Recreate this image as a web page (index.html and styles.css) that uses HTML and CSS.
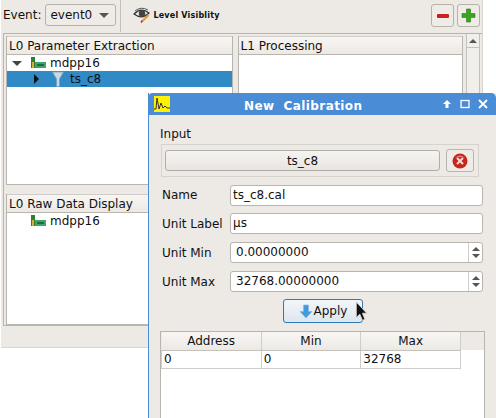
FILE: index.html
```html
<!DOCTYPE html>
<html lang="en">
<head>
  <meta charset="UTF-8">
  <title>New Calibration</title>
  <link rel="stylesheet" href="styles.css">
</head>
<body>

  <div class="main-window">
    <div class="toolbar">
      <span class="event-label">Event:</span>
      <div class="combo">event0 <span class="combo-arrow"></span></div>
      <div class="tool-sep"></div>
      <div class="tool-button">
        <svg width="17" height="16" viewBox="0 0 17 16">
          <path d="M1 7 Q8 0 16 6 Q9 13 1 7 Z" fill="#ecece8" stroke="#333" stroke-width="1.200"/>
          <path d="M2 4 Q8 -1 15 3" fill="none" stroke="#555" stroke-width="1"/>
          <circle cx="9" cy="6.500" r="3.200" fill="#444"/>
          <path d="M9.500 14 L15.500 8" stroke="#e0a030" stroke-width="2.200"/>
          <path d="M8 15.500 L9.500 13.500" stroke="#c03020" stroke-width="1.500"/>
        </svg>
        <span>Level Visiblity</span>
      </div>
      <div class="tool-right">
        <button class="square-btn">
          <svg width="14" height="14" viewBox="0 0 14 14"><rect x="1" y="5" width="12" height="4" rx="1" fill="#cc1f1f"/></svg>
        </button>
        <button class="square-btn">
          <svg width="15" height="15" viewBox="0 0 15 15"><path d="M5.500 1h4v4.500H14v4H9.500V14h-4V9.500H1v-4h4.500z" fill="#3aa51e" stroke="#2a7d14" stroke-width=".6"/></svg>
        </button>
      </div>
    </div>

    <div class="panes-frame">
      <div class="pane-col">
        <div class="pane pane-top">
          <div class="pane-header">L0 Parameter Extraction</div>
          <div class="tree-row">
            <span class="tree-arrow-down"></span>
            <svg class="board" width="15" height="12" viewBox="0 0 15 12">
              <rect x="0" y="0" width="4" height="11" fill="#2f7f35"/>
              <rect x="1" y="5" width="2" height="6" fill="#d8b030"/>
              <rect x="4" y="5" width="11" height="6" fill="#3fa46a"/>
              <rect x="6" y="7" width="7" height="2" fill="#1f6a40"/>
            </svg>
            <span>mdpp16</span>
          </div>
          <div class="tree-row tree-selected">
            <span class="tree-arrow-right"></span>
            <svg class="funnel" width="12" height="16" viewBox="0 0 12 16">
              <path d="M0.500 1 H11.500 L7.500 8 V15.500 H4.500 V8 Z" fill="#c4dbe6" stroke="#7f9cab" stroke-width=".8"/>
            </svg>
            <span>ts_c8</span>
          </div>
        </div>
        <div class="pane pane-bottom">
          <div class="pane-header">L0 Raw Data Display</div>
          <div class="tree-row">
            <span class="tree-arrow-none"></span>
            <svg class="board" width="15" height="12" viewBox="0 0 15 12">
              <rect x="0" y="0" width="4" height="11" fill="#2f7f35"/>
              <rect x="1" y="5" width="2" height="6" fill="#d8b030"/>
              <rect x="4" y="5" width="11" height="6" fill="#3fa46a"/>
              <rect x="6" y="7" width="7" height="2" fill="#1f6a40"/>
            </svg>
            <span>mdpp16</span>
          </div>
        </div>
      </div>
      <div class="pane pane-right">
        <div class="pane-header">L1 Processing</div>
      </div>
      <div class="scrollbar">
        <div class="scroll-up"></div>
      </div>
    </div>
  </div>

  <div class="dialog">
    <div class="title-bar">
      <svg class="title-icon" width="16" height="16" viewBox="0 0 16 16">
        <rect width="16" height="16" fill="#fff200"/>
        <path d="M0 13 H2 L3 2 L5 13 L7 7 L9 12 L11 10 L13 12 H16" fill="none" stroke="#333" stroke-width="1"/>
      </svg>
      <span class="title-text">New&nbsp; Calibration</span>
      <div class="title-buttons">
        <svg width="10" height="10" viewBox="0 0 10 10"><path d="M5 1 L9 5 H6.500 V9 H3.500 V5 H1 Z" fill="#fff"/></svg>
        <svg width="10" height="10" viewBox="0 0 10 10"><rect x="1" y="1.500" width="8" height="7" fill="none" stroke="#fff" stroke-width="1.300"/></svg>
        <svg width="10" height="10" viewBox="0 0 10 10"><path d="M1 1 L9 9 M9 1 L1 9" stroke="#fff" stroke-width="1.800"/></svg>
      </div>
    </div>

    <div class="dialog-body">
      <div class="input-label">Input</div>
      <div class="input-frame">
        <button class="input-button">ts_c8</button>
        <button class="clear-button">
          <svg width="16" height="16" viewBox="0 0 16 16">
            <circle cx="8" cy="8" r="7.500" fill="#c6261c"/>
            <path d="M3 5 Q8 0 13 5 Q8 3 3 5 Z" fill="#e88a80"/>
            <path d="M5 5 L11 11 M11 5 L5 11" stroke="#f0dcd8" stroke-width="2"/>
          </svg>
        </button>
      </div>

      <div class="form-grid">
        <label>Name</label>
        <div class="field">ts_c8.cal</div>
        <label>Unit Label</label>
        <div class="field">µs</div>
        <label>Unit Min</label>
        <div class="field spin"><span class="spin-value">0.00000000</span><span class="spin-arrows"><i class="up"></i><i class="down"></i></span></div>
        <label>Unit Max</label>
        <div class="field spin"><span class="spin-value">32768.00000000</span><span class="spin-arrows"><i class="up"></i><i class="down"></i></span></div>
      </div>

      <div class="apply-row">
        <button class="apply-button">
          <svg width="14" height="15" viewBox="0 0 14 15"><path d="M4.500 1 H9.500 V7.500 H13 L7 14 L1 7.500 H4.500 Z" fill="#3f9be0" stroke="#7fb9e6" stroke-width=".6"/></svg>
          Apply
        </button>
      </div>

      <div class="table-frame">
        <table>
          <thead>
            <tr><th>Address</th><th>Min</th><th>Max</th></tr>
          </thead>
          <tbody>
            <tr><td>0</td><td>0</td><td>32768</td></tr>
          </tbody>
        </table>
      </div>
    </div>
  </div>

  <svg class="cursor" width="13" height="21" viewBox="0 0 14 24">
    <path d="M1 1 V19 L5 15 L8 22 L11 21 L8 14 L13 14 Z" fill="#111" stroke="#ddd" stroke-width="1"/>
  </svg>

</body>
</html>
```

FILE: styles.css
```css
* {
  box-sizing: border-box;
}
body {
  margin: 0;
  background-color: #fff;
  font-family: "DejaVu Sans", sans-serif;
  font-size: 12px;
  color: #111;
  width: 496px;
  height: 418px;
  overflow: hidden;
}
button {
  font-family: inherit;
  font-size: inherit;
  color: inherit;
  margin: 0;
  padding: 0;
}

/* main window */
.main-window {
  width: 482px;
  height: 348px;
  margin-left: 1px;
  background-color: #edeae6;
  border-right: 1px solid #d8d5d0;
  border-bottom: 1px solid #d8d5d0;
}
.toolbar {
  height: 33px;
  padding: 4px 2px 0 2px;
  display: flex;
  align-items: flex-start;
}
.event-label {
  line-height: 22px;
  margin-right: 4px;
}
.combo {
  width: 71px;
  height: 22px;
  border: 1px solid #b5b1ab;
  border-radius: 3px;
  background-color: #efece8;
  line-height: 19px;
  padding-left: 4px;
  display: flex;
  align-items: center;
  justify-content: space-between;
  padding-right: 6px;
}
.combo-arrow {
  width: 0;
  height: 0;
  border-left: 5px solid transparent;
  border-right: 5px solid transparent;
  border-top: 5px solid #555;
}
.tool-sep {
  width: 1px;
  height: 32px;
  margin: -4px 0 0 4px;
  background-color: #c2beb8;
}
.tool-button {
  display: flex;
  align-items: center;
  height: 22px;
  margin-left: 12px;
  gap: 3px;
  font-size: 8px;
  font-weight: bold;
  letter-spacing: 0.2px;
}
.tool-right {
  margin-left: auto;
  display: flex;
  gap: 3px;
}
.square-btn {
  width: 23px;
  height: 23px;
  border: 1px solid #b5b1ab;
  border-radius: 3px;
  background-color: #efece8;
  display: flex;
  align-items: center;
  justify-content: center;
}

/* panes */
.panes-frame {
  margin-left: 2px;
  height: 293px;
  border: 1px solid #b8b4ae;
  border-right: none;
  padding: 2px 2px 0 2px;
  display: flex;
}
.pane-col {
  width: 227px;
  display: flex;
  flex-direction: column;
}
.pane {
  background-color: #fff;
  border: 1px solid #b8b4ae;
  border-top: none;
}
.pane-top {
  height: 150px;
}
.pane-bottom {
  height: 131px;
  margin-top: 9px;
}
.pane-right {
  width: 226px;
  margin-left: 5px;
}
.pane-header {
  height: 19px;
  line-height: 18px;
  padding-left: 2px;
  background: linear-gradient(#f8f6f3, #ece9e5);
  border-top: 1px solid #cfccc7;
  border-bottom: 1px solid #b8b4ae;
  white-space: nowrap;
}
.tree-row {
  height: 16px;
  display: flex;
  align-items: center;
  white-space: nowrap;
}
.tree-selected {
  background-color: #2f8ac6;
}
.tree-arrow-down {
  width: 0;
  height: 0;
  margin-left: 5px;
  margin-right: 9px;
  border-left: 5px solid transparent;
  border-right: 5px solid transparent;
  border-top: 5px solid #444;
}
.tree-arrow-right {
  width: 0;
  height: 0;
  margin-left: 27px;
  margin-right: 13px;
  border-top: 5px solid transparent;
  border-bottom: 5px solid transparent;
  border-left: 5px solid #111;
}
.tree-arrow-none {
  width: 24px;
}
.board {
  margin-right: 4px;
}
.funnel {
  margin-right: 6px;
}
.scrollbar {
  width: 14px;
  margin: -2px 0 0 3px;
  height: 285px;
  border: 1px solid #c4c0ba;
  border-top: none;
  background-color: #f1efec;
}
.scroll-up {
  height: 14px;
  border-bottom: 1px solid #c4c0ba;
  display: flex;
  align-items: center;
  justify-content: center;
}
.scroll-up::before {
  content: "";
  border-left: 4px solid transparent;
  border-right: 4px solid transparent;
  border-bottom: 4px solid #555;
}

/* dialog over the main window */
.dialog {
  position: absolute;
  left: 148px;
  top: 93px;
  width: 348px;
  height: 325px;
  background-color: #edeae6;
  border-left: 1px solid #4a8cd6;
}
.title-bar {
  height: 22px;
  margin-left: -1px;
  background-color: #4a8cd6;
  border-radius: 5px 5px 0 0;
  display: flex;
  align-items: center;
  position: relative;
  color: #fff;
  font-weight: bold;
}
.title-icon {
  margin-left: 6px;
}
.title-text {
  position: absolute;
  left: 96px;
  padding-top: 3px;
  letter-spacing: 0.4px;
}
.title-buttons {
  margin-left: auto;
  margin-right: 8px;
  display: flex;
  gap: 8px;
}
.dialog-body {
  padding: 12px 0 0 11px;
}
.input-label {
  line-height: 14px;
}
.input-frame {
  width: 318px;
  height: 33px;
  margin: 3px 0 0 1px;
  border: 1px solid #d6d3ce;
  display: flex;
  align-items: center;
  padding: 0 4px 0 3px;
  gap: 6px;
}
.input-button {
  width: 275px;
  height: 21px;
  border: 1px solid #b0aca6;
  border-radius: 3px;
  background: linear-gradient(#f6f4f1, #e8e5e1);
}
.clear-button {
  width: 28px;
  height: 23px;
  border: 1px solid #b8b4ae;
  border-radius: 3px;
  background-color: #efece8;
  display: flex;
  align-items: center;
  justify-content: center;
}
.form-grid {
  display: grid;
  grid-template-columns: 68px 253px;
  grid-template-rows: 20px 21px 21px 21px;
  row-gap: 8px;
  margin-top: 8px;
  padding-left: 2px;
  align-items: center;
}
.field {
  height: 21px;
  background-color: #fff;
  border: 1px solid #b8b4ae;
  border-radius: 3px;
  line-height: 19px;
  padding-left: 2px;
}
.spin {
  display: flex;
  padding-left: 5px;
}
.spin-value {
  flex: 1;
}
.spin-arrows {
  width: 14px;
  border-left: 1px solid #d0cdc8;
  display: flex;
  flex-direction: column;
  align-items: center;
  justify-content: center;
  gap: 3px;
}
.spin-arrows i {
  width: 0;
  height: 0;
  border-left: 4px solid transparent;
  border-right: 4px solid transparent;
}
.spin-arrows .up {
  border-bottom: 4px solid #555;
}
.spin-arrows .down {
  border-top: 4px solid #555;
}
.apply-row {
  margin-top: 7px;
  padding-left: 123px;
}
.apply-button {
  width: 80px;
  height: 24px;
  border: 1px solid #2f79b5;
  border-radius: 3px;
  background: linear-gradient(#f2f6fa, #dde6ee);
  display: flex;
  align-items: center;
  justify-content: center;
  gap: 1px;
}
.table-frame {
  width: 325px;
  height: 90px;
  margin-top: 8px;
  border: 1px solid #b8b4ae;
  border-bottom: none;
  background: linear-gradient(#edeae6 18px, #fff 18px);
}
table {
  border-collapse: collapse;
  table-layout: fixed;
  width: 300px;
}
th {
  height: 18px;
  font-weight: normal;
  background: linear-gradient(#f8f6f3, #ece9e5);
  border-right: 1px solid #d0cdc8;
  border-bottom: 1px solid #c4c0ba;
  padding: 0;
}
td {
  height: 18px;
  background-color: #fff;
  border: 1px solid #d0cdc8;
  padding: 0 0 0 2px;
}

.cursor {
  position: absolute;
  left: 355px;
  top: 301px;
}
```
